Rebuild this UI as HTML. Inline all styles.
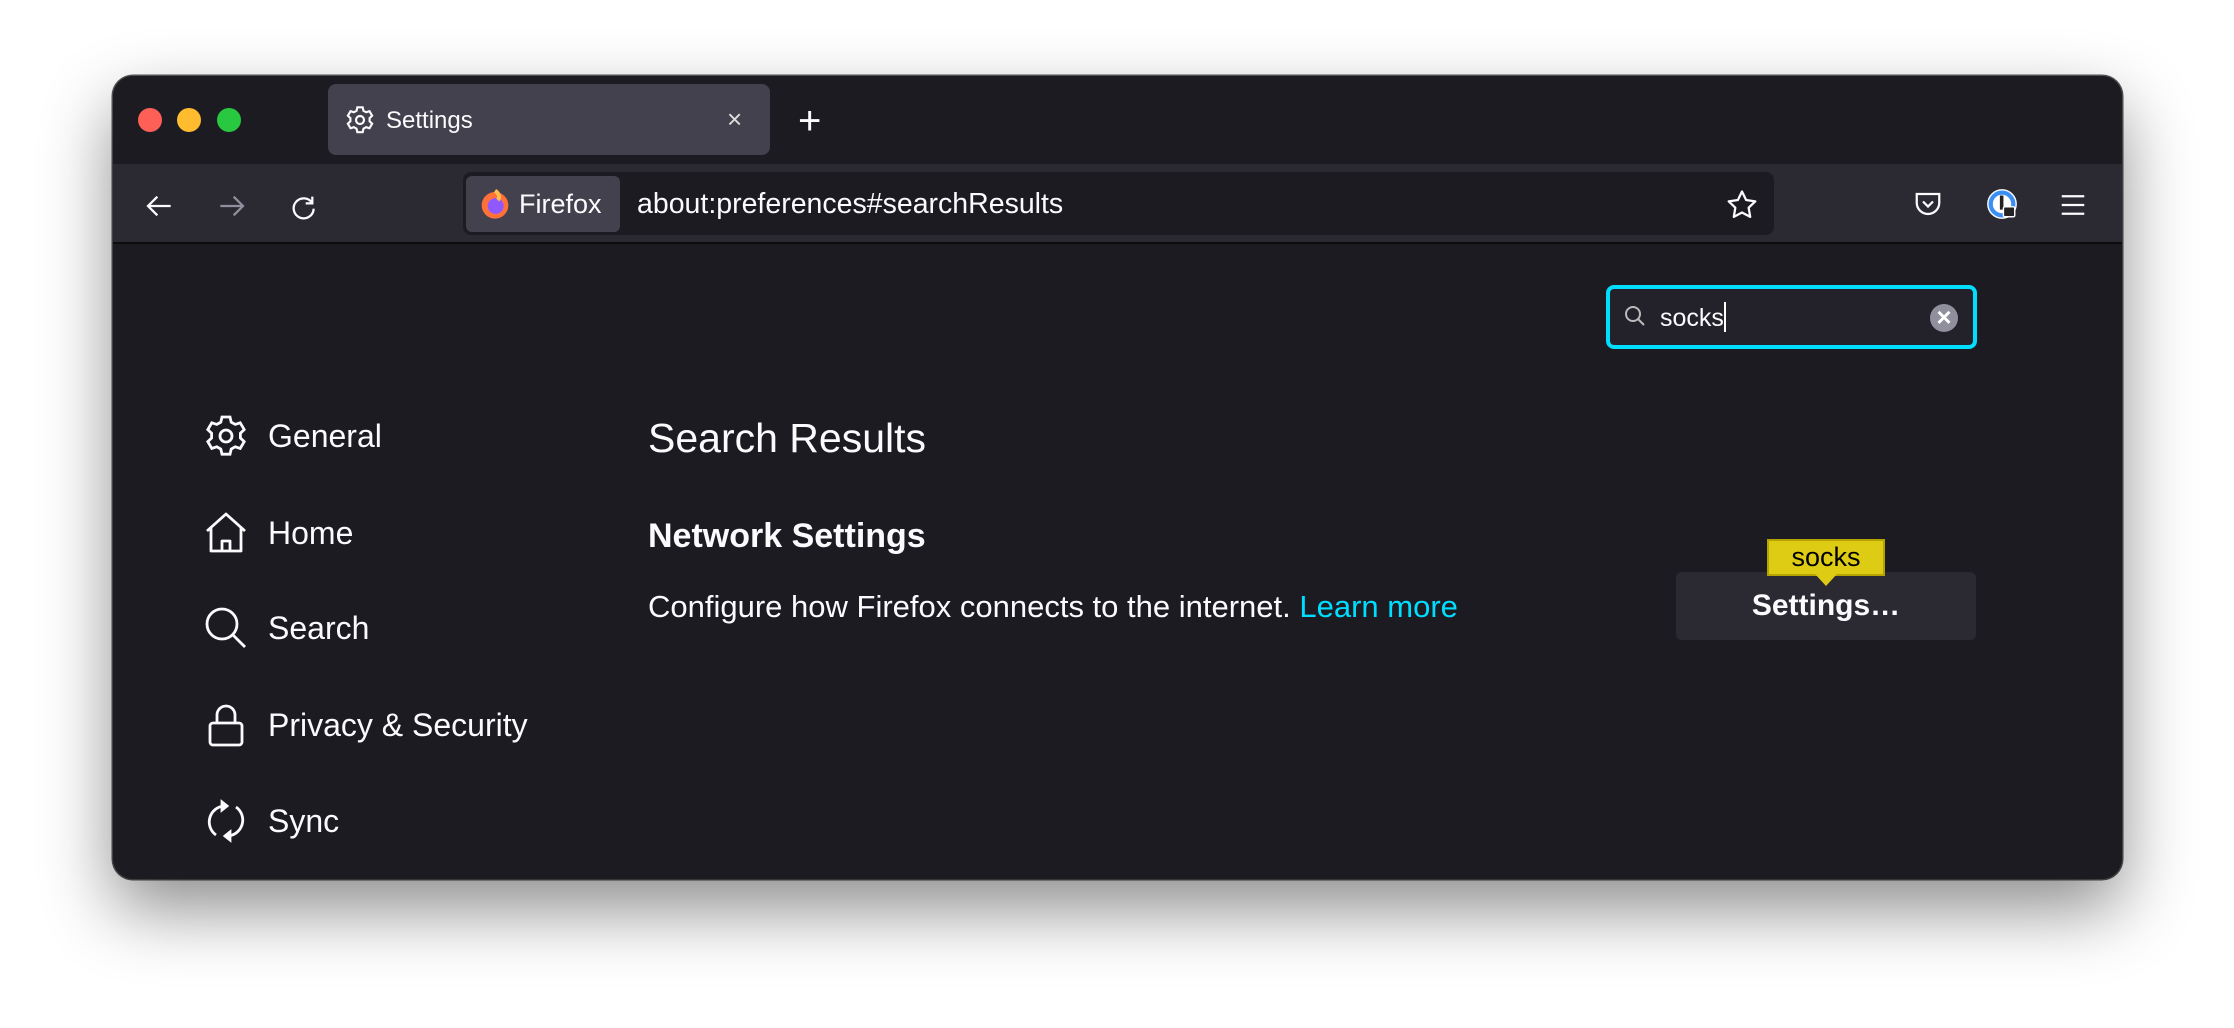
<!DOCTYPE html>
<html><head><meta charset="utf-8"><style>
*{margin:0;padding:0;box-sizing:border-box}
body{width:2234px;height:1028px;background:#fff;position:relative;overflow:hidden;font-family:"Liberation Sans",sans-serif;color:#fbfbfe}
.win{position:absolute;left:113px;top:76px;width:2009px;height:803px;border-radius:20px;background:#1c1b22;overflow:hidden;box-shadow:0 30px 70px rgba(0,0,0,.45),0 0 0 1.5px #555}
.abs{position:absolute}
.tl{position:absolute;top:108px;width:24px;height:24px;border-radius:50%}
.ic{position:absolute;left:202px}
.nt{position:absolute;left:268px;font-size:32px;white-space:nowrap;line-height:36px}
</style></head><body>
<div class="win">
 <div class="abs" style="left:0;top:0;width:2009px;height:88px;background:#1c1b22"></div>
 <div class="abs" style="left:0;top:88px;width:2009px;height:80px;background:#2b2a33;border-bottom:2px solid #0c0c0f"></div>
</div>
<div class="tl" style="left:138px;background:#fe5f57"></div>
<div class="tl" style="left:177px;background:#febc2e"></div>
<div class="tl" style="left:217px;background:#28c840"></div>
<!-- tab -->
<div class="abs" style="left:328px;top:84px;width:442px;height:71px;background:#42414d;border-radius:8px"></div>
<svg class="abs" style="left:344px;top:104px" width="32" height="32" viewBox="0 0 24 24" fill="none" stroke="#fbfbfe" stroke-width="1.6"><path d="M10 2.5h4l.6 2.6 2 1.1 2.5-.8 2 3.4-1.9 1.8v2.4l1.9 1.8-2 3.4-2.5-.8-2 1.1-.6 2.6h-4l-.6-2.6-2-1.1-2.5.8-2-3.4 1.9-1.8v-2.4L2.9 8.8l2-3.4 2.5.8 2-1.1z"/><circle cx="12" cy="12" r="3"/></svg>
<div class="abs" style="left:386px;top:107px;font-size:24px">Settings</div>
<div class="abs" style="left:727px;top:104px;font-size:26px;color:#ddd">×</div>
<div class="abs" style="left:798px;top:99px;font-size:40px;font-weight:300">+</div>
<!-- toolbar -->
<svg class="abs" style="left:144px;top:190px" width="32" height="32" viewBox="0 0 24 24" fill="none" stroke="#fbfbfe" stroke-width="1.7"><path d="M20 12H4M10 5l-7 7 7 7"/></svg>
<svg class="abs" style="left:215px;top:190px" width="32" height="32" viewBox="0 0 24 24" fill="none" stroke="#8f8f9d" stroke-width="1.7"><path d="M4 12h16M14 5l7 7-7 7"/></svg>
<svg class="abs" style="left:287px;top:190px" width="32" height="32" viewBox="0 0 24 24" fill="none" stroke="#fbfbfe" stroke-width="1.7"><path d="M19 5v5h-5M19 10a7.5 7.5 0 1 0 1 4"/></svg>
<div class="abs" style="left:463px;top:172px;width:1311px;height:63px;background:#1c1b22;border-radius:8px"></div>
<div class="abs" style="left:466px;top:176px;width:154px;height:56px;background:#42414d;border-radius:6px"></div>
<svg class="abs" style="left:479px;top:188px" width="32" height="32" viewBox="0 0 24 24"><circle cx="12" cy="13" r="10" fill="#ff7139"/><circle cx="12.5" cy="13.5" r="6" fill="#9059ff"/><path d="M12 2c3 2 4 5 2 7" stroke="#ffbd4f" stroke-width="3" fill="none"/></svg>
<div class="abs" style="left:519px;top:189px;font-size:27px">Firefox</div>
<div class="abs" style="left:637px;top:188px;font-size:28.5px">about:preferences#searchResults</div>
<svg class="abs" style="left:1725px;top:188px" width="34" height="34" viewBox="0 0 24 24" fill="none" stroke="#fbfbfe" stroke-width="1.6" stroke-linejoin="round"><path d="M12 2.5l2.9 6 6.5.9-4.7 4.5 1.1 6.5L12 17.3l-5.8 3.1 1.1-6.5L2.6 9.4l6.5-.9z"/></svg>
<svg class="abs" style="left:1913px;top:189px" width="30" height="30" viewBox="0 0 24 24" fill="none" stroke="#fbfbfe" stroke-width="1.8"><path d="M3 4h18v7a9 9 0 0 1-18 0z"/><path d="M8 10l4 4 4-4"/></svg>
<svg class="abs" style="left:1985px;top:187px" width="34" height="34" viewBox="0 0 24 24"><circle cx="12" cy="12" r="10.5" fill="#fff"/><circle cx="12" cy="12" r="8" fill="none" stroke="#3a8ef6" stroke-width="3"/><rect x="10.5" y="6" width="2.5" height="10" fill="#222"/><rect x="13" y="14" width="8" height="7" rx="1" fill="#222" stroke="#fff"/></svg>
<svg class="abs" style="left:2058px;top:190px" width="30" height="30" viewBox="0 0 24 24" stroke="#fbfbfe" stroke-width="1.8"><path d="M3 5h18M3 12h18M3 19h18"/></svg>
<!-- search box -->
<div class="abs" style="left:1606px;top:285px;width:371px;height:64px;border:4px solid #00ddff;border-radius:8px;background:#23222b"></div>
<svg class="abs" style="left:1623px;top:304px" width="24" height="24" viewBox="0 0 24 24" fill="none" stroke="#bbb" stroke-width="2"><circle cx="10" cy="10" r="7"/><path d="M15 15l6 6"/></svg>
<div class="abs" style="left:1660px;top:302px;font-size:25px">socks<span style="display:inline-block;width:2px;height:30px;background:#fff;vertical-align:-6px"></span></div>
<div class="abs" style="left:1930px;top:304px;width:28px;height:28px;border-radius:50%;background:#8f8f9d;color:#fff;font-size:26px;line-height:26px;text-align:center;font-weight:bold">×</div>
<!-- sidebar -->
<svg class="ic" style="top:412px" width="48" height="48" viewBox="0 0 24 24" fill="none" stroke="#fbfbfe" stroke-width="1.4"><path d="M10 2.5h4l.6 2.6 2 1.1 2.5-.8 2 3.4-1.9 1.8v2.4l1.9 1.8-2 3.4-2.5-.8-2 1.1-.6 2.6h-4l-.6-2.6-2-1.1-2.5.8-2-3.4 1.9-1.8v-2.4L2.9 8.8l2-3.4 2.5.8 2-1.1z"/><circle cx="12" cy="12" r="3"/></svg>
<div class="nt" style="top:418px">General</div>
<svg class="ic" style="top:509px" width="48" height="48" viewBox="0 0 24 24" fill="none" stroke="#fbfbfe" stroke-width="1.4" stroke-linejoin="round"><path d="M2.5 11L12 2.5 21.5 11M4.5 9.5V21h15V9.5M10 21v-5h4v5"/></svg>
<div class="nt" style="top:515px">Home</div>
<svg class="ic" style="top:604px" width="48" height="48" viewBox="0 0 24 24" fill="none" stroke="#fbfbfe" stroke-width="1.4"><circle cx="10" cy="10" r="7.5"/><path d="M15.5 15.5l6 6"/></svg>
<div class="nt" style="top:610px">Search</div>
<svg class="ic" style="top:701px" width="48" height="48" viewBox="0 0 24 24" fill="none" stroke="#fbfbfe" stroke-width="1.4"><rect x="4" y="11" width="16" height="11" rx="1.5"/><path d="M7.5 11V7a4.5 4.5 0 0 1 9 0v4"/></svg>
<div class="nt" style="top:707px">Privacy &amp; Security</div>
<svg class="ic" style="top:797px" width="48" height="48" viewBox="0 0 24 24" fill="none" stroke="#fbfbfe" stroke-width="1.4"><path d="M7 19A8 8 0 0 1 11 4.5M17 5a8 8 0 0 1-4 14.5"/><path d="M10 2.5l2.5 2-2.5 2z M14 17.5l-2.5 2 2.5 2z" fill="#fbfbfe"/></svg>
<div class="nt" style="top:803px">Sync</div>
<!-- content -->
<div class="abs" style="left:648px;top:415px;font-size:41px">Search Results</div>
<div class="abs" style="left:648px;top:517px;font-size:34px;font-weight:bold">Network Settings</div>
<div class="abs" style="left:648px;top:589px;font-size:31px">Configure how Firefox connects to the internet. <span style="color:#00ddff">Learn more</span></div>
<div class="abs" style="left:1676px;top:572px;width:300px;height:68px;background:#2b2a33;border-radius:6px;text-align:center;font-size:30px;font-weight:bold;line-height:68px">Settings…</div>
<div class="abs" style="left:1767px;top:539px;width:118px;height:37px;background:#decb13;border:2px solid #b5a300;color:#000;font-size:27px;text-align:center;line-height:32px">socks</div>
<div class="abs" style="left:1815px;top:574px;width:0;height:0;border-left:11px solid transparent;border-right:11px solid transparent;border-top:12px solid #decb13"></div>
</body></html>
